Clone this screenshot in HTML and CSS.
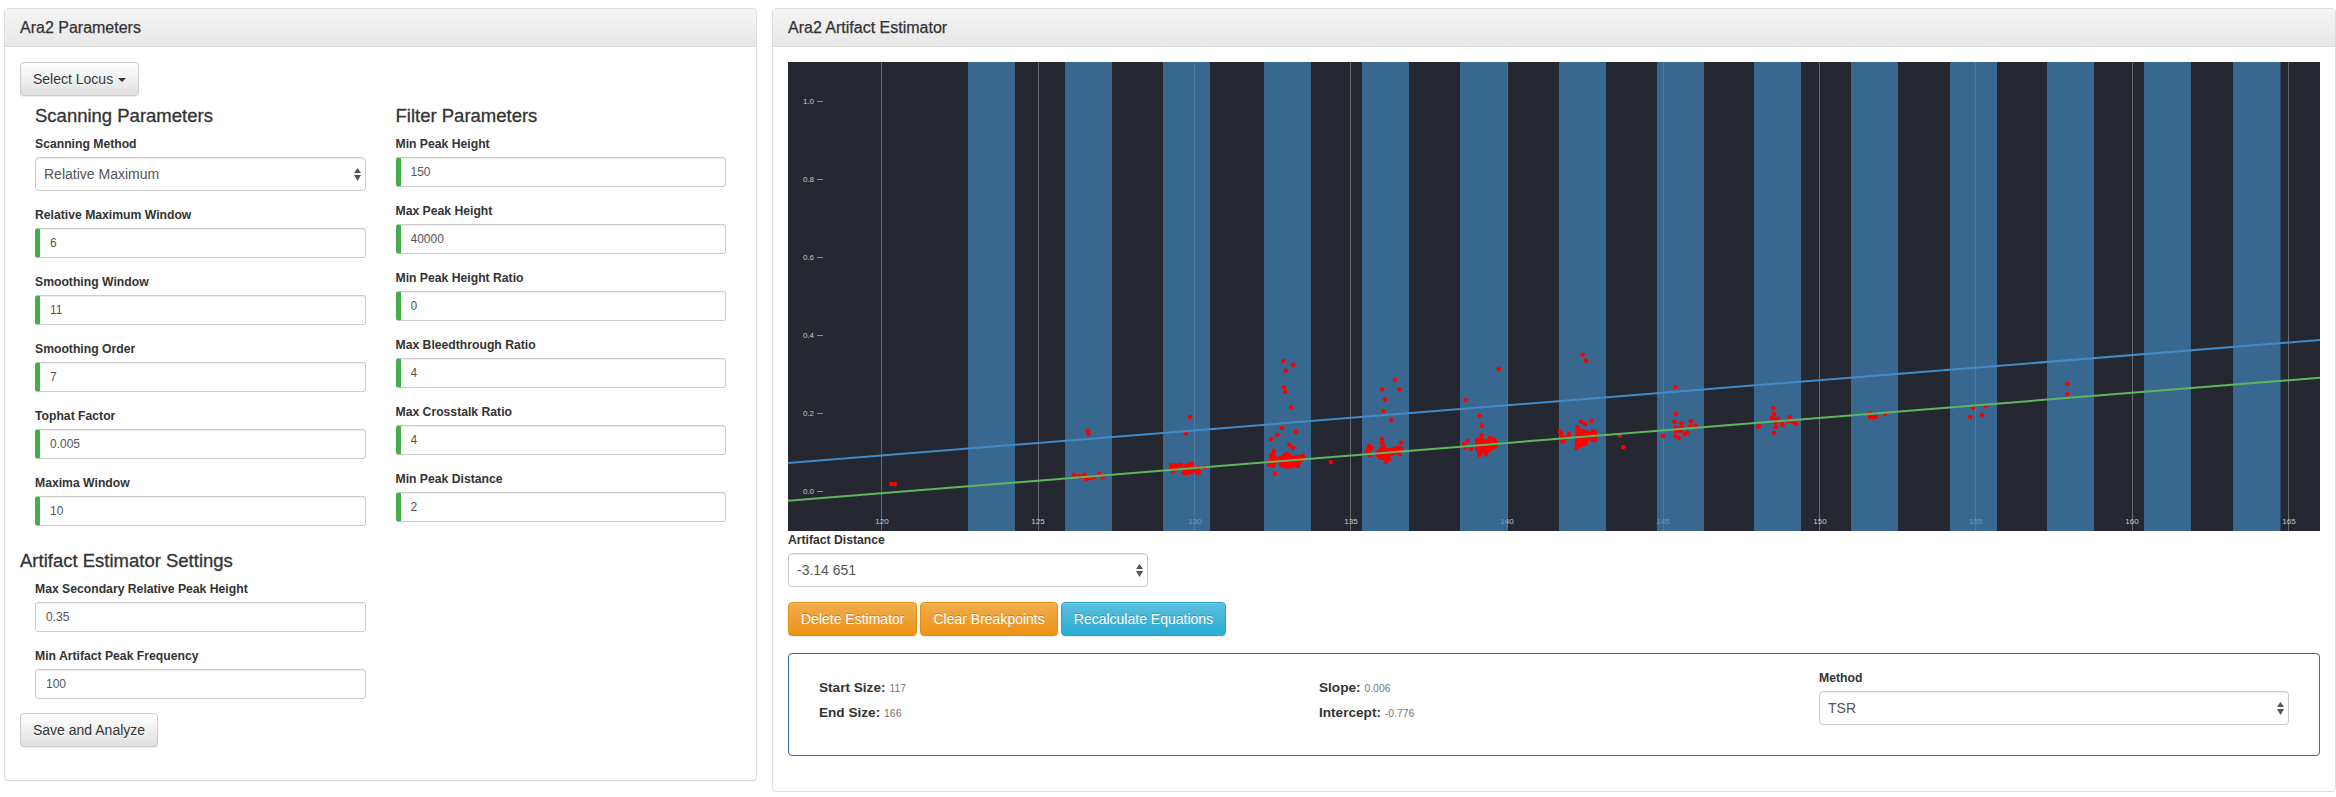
FILE: index.html
```html
<!DOCTYPE html>
<html lang="en">
<head>
<meta charset="utf-8">
<title>Ara2</title>
<link rel="stylesheet" href="styles.css">
</head>
<body>
<div class="page">
  <section class="panel panel-left">
    <div class="panel-heading">Ara2 Parameters</div>
    <div class="panel-body body-left">
      <button class="btn btn-default">Select Locus <span class="caret"></span></button>
      <div class="param-cols">
        <div class="param-col">
          <h4 class="sub-title">Scanning Parameters</h4>
          <div class="form-group">
            <label class="field-label">Scanning Method</label>
            <div class="select-wrap">
              <select class="form-select"><option>Relative Maximum</option></select>
              <svg class="select-arrows" viewBox="0 0 7 13"><path d="M3.5 0L7 5H0zM0 7h7L3.5 13z"/></svg>
            </div>
          </div>
          <div class="form-group"><label class="field-label">Relative Maximum Window</label><input class="form-input valid" value="6"></div>
          <div class="form-group"><label class="field-label">Smoothing Window</label><input class="form-input valid" value="11"></div>
          <div class="form-group"><label class="field-label">Smoothing Order</label><input class="form-input valid" value="7"></div>
          <div class="form-group"><label class="field-label">Tophat Factor</label><input class="form-input valid" value="0.005"></div>
          <div class="form-group"><label class="field-label">Maxima Window</label><input class="form-input valid" value="10"></div>
        </div>
        <div class="param-col">
          <h4 class="sub-title">Filter Parameters</h4>
          <div class="form-group"><label class="field-label">Min Peak Height</label><input class="form-input valid" value="150"></div>
          <div class="form-group"><label class="field-label">Max Peak Height</label><input class="form-input valid" value="40000"></div>
          <div class="form-group"><label class="field-label">Min Peak Height Ratio</label><input class="form-input valid" value="0"></div>
          <div class="form-group"><label class="field-label">Max Bleedthrough Ratio</label><input class="form-input valid" value="4"></div>
          <div class="form-group"><label class="field-label">Max Crosstalk Ratio</label><input class="form-input valid" value="4"></div>
          <div class="form-group"><label class="field-label">Min Peak Distance</label><input class="form-input valid" value="2"></div>
        </div>
      </div>
      <h4 class="sub-title settings-title">Artifact Estimator Settings</h4>
      <div class="settings-fields">
        <div class="form-group"><label class="field-label">Max Secondary Relative Peak Height</label><input class="form-input" value="0.35"></div>
        <div class="form-group"><label class="field-label">Min Artifact Peak Frequency</label><input class="form-input" value="100"></div>
      </div>
      <button class="btn btn-default btn-save">Save and Analyze</button>
    </div>
  </section>

  <section class="panel panel-right">
    <div class="panel-heading">Ara2 Artifact Estimator</div>
    <div class="panel-body">
      <svg class="plot" viewBox="788 62 1532 469" width="1532" height="469">
        <rect class="plot-bg" x="788" y="62" width="1532" height="469"/>
        <g class="grid">
          <path d="M881.5 62v469M1038.5 62v469M1194.5 62v469M1350.5 62v469M1507.5 62v469M1663.5 62v469M1819.5 62v469M1975.5 62v469M2132.5 62v469M2288.5 62v469"/>
        </g>
        <g class="ticks">
          <path d="M817 101.5h6M817 179.5h6M817 257.5h6M817 335.5h6M817 413.5h6M817 491.5h6"/>
        </g>
        <g class="tick-labels y-labels">
          <text x="814" y="104">1.0</text>
          <text x="814" y="182">0.8</text>
          <text x="814" y="260">0.6</text>
          <text x="814" y="338">0.4</text>
          <text x="814" y="416">0.2</text>
          <text x="814" y="494">0.0</text>
        </g>
        <g class="tick-labels x-labels">
          <text x="882" y="524">120</text>
          <text x="1038" y="524">125</text>
          <text x="1195" y="524">130</text>
          <text x="1351" y="524">135</text>
          <text x="1507" y="524">140</text>
          <text x="1663" y="524">145</text>
          <text x="1820" y="524">150</text>
          <text x="1976" y="524">155</text>
          <text x="2132" y="524">160</text>
          <text x="2289" y="524">165</text>
        </g>
        <g class="bars">
          <rect x="968" y="62" width="47" height="469"/>
          <rect x="1065" y="62" width="47" height="469"/>
          <rect x="1163" y="62" width="47" height="469"/>
          <rect x="1264" y="62" width="47" height="469"/>
          <rect x="1362" y="62" width="47" height="469"/>
          <rect x="1460" y="62" width="47" height="469"/>
          <rect x="1559" y="62" width="47" height="469"/>
          <rect x="1657" y="62" width="47" height="469"/>
          <rect x="1754" y="62" width="47" height="469"/>
          <rect x="1851" y="62" width="47" height="469"/>
          <rect x="1950" y="62" width="47" height="469"/>
          <rect x="2047" y="62" width="47" height="469"/>
          <rect x="2144" y="62" width="47" height="469"/>
          <rect x="2233" y="62" width="47.500" height="469"/>
        </g>
        <path class="points" d="M891.4 484h0M895 484.300h0M1087.900 430.700h0M1088.400 433.700h0M1074 474.700h0M1078.700 475.700h0M1084.800 474.700h0M1086.300 479h0M1090.400 478.300h0M1094.500 476.700h0M1099 474h0M1102.600 477.300h0M1081 477h0M1190 417h0M1185.800 433.300h0M1171 465h0M1171 469h0M1173 467h0M1173 471h0M1175 465h0M1175 469h0M1177 467h0M1179 465h0M1181 465h0M1184 469h0M1184 473h0M1186 466h0M1186 470h0M1186 473h0M1188 466h0M1188 470h0M1188 473h0M1190 465h0M1190 469h0M1190 472h0M1192 464h0M1192 468h0M1192 472h0M1196 470h0M1197 473h0M1199 472h0M1205 467h0M1198 468h0M1283.300 361h0M1293 364.700h0M1285.700 370.700h0M1284 387h0M1285 391.700h0M1291 407h0M1281.700 428h0M1296 431.700h0M1277.300 434.700h0M1271 439.300h0M1289.300 444.700h0M1293 448h0M1273.700 450.700h0M1273.300 454h0M1275 473.700h0M1330.700 462h0M1269 465h0M1270 462h0M1272 459h0M1271 456h0M1274 463h0M1276 461h0M1273 466h0M1275 458h0M1277 459h0M1281 458h0M1281 462h0M1281 465h0M1283 457h0M1283 461h0M1283 465h0M1285 455h0M1285 459h0M1285 463h0M1285 466h0M1287 454h0M1287 458h0M1287 462h0M1287 466h0M1289 456h0M1289 460h0M1289 464h0M1289 467h0M1291 458h0M1291 462h0M1291 466h0M1293 459h0M1293 463h0M1293 466h0M1295 458h0M1295 461h0M1295 465h0M1297 457h0M1297 461h0M1298 466h0M1299 458h0M1299 462h0M1301 457h0M1301 460h0M1303 456h0M1395 379.700h0M1382.300 389.300h0M1399.300 389.300h0M1385 399.700h0M1383.300 411h0M1391.300 420.300h0M1401 442.700h0M1401.700 448.700h0M1399.700 454.300h0M1382 439h0M1386 462h0M1367 452h0M1368 449h0M1369 446h0M1370 450h0M1370 455h0M1367 453h0M1371 448h0M1382 443h0M1383 446h0M1381 449h0M1384 448h0M1378 452h0M1378 455h0M1380 451h0M1380 455h0M1380 458h0M1382 452h0M1382 456h0M1384 451h0M1384 455h0M1384 458h0M1386 450h0M1386 454h0M1388 451h0M1388 455h0M1388 458h0M1390 450h0M1390 454h0M1392 450h0M1392 454h0M1394 449h0M1394 453h0M1396 449h0M1396 452h0M1398 448h0M1398 451h0M1389 459h0M1498.700 368.700h0M1465.700 400.300h0M1479.300 415.700h0M1481.700 425.700h0M1481.700 435h0M1467.700 440.700h0M1464 444.300h0M1465 447.700h0M1471 448.700h0M1490 437.700h0M1494 439.300h0M1479.700 455h0M1486 454.300h0M1477 440h0M1477 444h0M1477 448h0M1479 441h0M1479 445h0M1479 449h0M1479 452h0M1481 439h0M1481 443h0M1481 447h0M1481 451h0M1483 441h0M1483 445h0M1483 449h0M1483 452h0M1485 441h0M1485 445h0M1485 449h0M1487 443h0M1487 447h0M1487 451h0M1489 442h0M1489 446h0M1489 450h0M1491 444h0M1491 448h0M1493 445h0M1493 448h0M1495 446h0M1495 442h0M1582.600 354.700h0M1586.200 360.700h0M1591.300 420.700h0M1581 421.700h0M1585 424h0M1577.600 427h0M1576.500 447.700h0M1619.700 435.700h0M1623.200 447h0M1577 432h0M1577 436h0M1577 440h0M1577 444h0M1579 430h0M1579 434h0M1579 438h0M1579 442h0M1579 446h0M1581 433h0M1581 437h0M1581 441h0M1581 445h0M1583 431h0M1583 435h0M1583 439h0M1583 443h0M1585 432h0M1585 436h0M1585 440h0M1585 444h0M1587 433h0M1587 437h0M1587 441h0M1589 434h0M1589 438h0M1591 435h0M1591 438h0M1593 431h0M1593 435h0M1593 440h0M1595 433h0M1595 437h0M1595 440h0M1561 433h0M1562 436h0M1560 432h0M1562 440h0M1564 441h0M1565 438h0M1563 442h0M1569 434h0M1568 437h0M1675.500 387h0M1676 414h0M1674.500 421.700h0M1690.800 421h0M1681.600 423.300h0M1695.300 425.700h0M1690.300 426.300h0M1676 427.300h0M1681.600 426.700h0M1676 431.300h0M1681 431h0M1687 432.700h0M1685 434.300h0M1662.800 436h0M1675.500 436.300h0M1678.600 438h0M1678 430h0M1773.500 408.300h0M1774 414h0M1771.500 418h0M1778 418.700h0M1775 419h0M1789.800 417.300h0M1775.500 422.700h0M1787.700 421h0M1792.800 422.300h0M1796.400 424h0M1782.100 424h0M1782.600 425.300h0M1776 427.300h0M1758.800 425.700h0M1758.300 427h0M1774 433h0M1870 413.300h0M1870 417.300h0M1872.500 417.300h0M1876 416.700h0M1885.200 414h0M1973 407.700h0M1985.700 406.300h0M1970 417h0M1982 414.700h0M2067.400 384h0M2067.400 394.300h0"/>
        <line class="line-blue" x1="788" y1="463" x2="2320" y2="340"/>
        <line class="line-green" x1="788" y1="500.700" x2="2320" y2="377.700"/>
      </svg>

      <div class="distance-field">
        <label class="field-label">Artifact Distance</label>
        <div class="select-wrap">
          <select class="form-select"><option>-3.14 651</option></select>
          <svg class="select-arrows" viewBox="0 0 7 13"><path d="M3.500 0L7 5H0zM0 7h7L3.500 13z"/></svg>
        </div>
      </div>

      <div class="action-row">
        <button class="btn btn-warning">Delete Estimator</button>
        <button class="btn btn-warning">Clear Breakpoints</button>
        <button class="btn btn-info">Recalculate Equations</button>
      </div>

      <div class="info-box">
        <div class="info-col info-text">
          <div class="info-line"><strong>Start Size:</strong> <small>117</small></div>
          <div class="info-line"><strong>End Size:</strong> <small>166</small></div>
        </div>
        <div class="info-col info-text">
          <div class="info-line"><strong>Slope:</strong> <small>0.006</small></div>
          <div class="info-line"><strong>Intercept:</strong> <small>-0.776</small></div>
        </div>
        <div class="info-col">
          <div class="form-group">
            <label class="field-label">Method</label>
            <div class="select-wrap">
              <select class="form-select"><option>TSR</option></select>
              <svg class="select-arrows" viewBox="0 0 7 13"><path d="M3.500 0L7 5H0zM0 7h7L3.500 13z"/></svg>
            </div>
          </div>
        </div>
      </div>
    </div>
  </section>
</div>
</body>
</html>
```
FILE: styles.css
```css
* { box-sizing: border-box; }
html, body { margin: 0; padding: 0; background: #fff; }
body {
  font-family: "Liberation Sans", Arial, sans-serif;
  font-size: 14px;
  line-height: 20px;
  color: #333;
}
.page {
  display: flex;
  align-items: flex-start;
  gap: 15px;
  padding: 8px 0 0 4px;
}
.panel {
  background: #fff;
  border: 1px solid #ddd;
  border-radius: 4px;
  box-shadow: 0 1px 1px rgba(0, 0, 0, .05);
}
.panel-left { width: 753px; flex: none; }
.panel-right { width: 1564px; flex: none; }
.panel-heading {
  height: 38px;
  padding: 9px 15px;
  font-size: 16px;
  color: #333;
  -webkit-text-stroke: .25px #333;
  background: linear-gradient(to bottom, #f5f5f5, #e8e8e8);
  border-bottom: 1px solid #ddd;
  border-radius: 3px 3px 0 0;
}
.panel-body { padding: 15px; }
.body-left { padding-bottom: 33px; }

.btn {
  display: block;
  height: 34px;
  padding: 6px 12px;
  font: 14px/20px "Liberation Sans", Arial, sans-serif;
  border: 1px solid #ccc;
  border-radius: 4px;
  white-space: nowrap;
  box-shadow: inset 0 1px 0 rgba(255, 255, 255, .15), 0 1px 1px rgba(0, 0, 0, .075);
}
.btn-default {
  color: #333;
  background: linear-gradient(to bottom, #fff, #e0e0e0);
  border-color: #ccc;
  text-shadow: 0 1px 0 #fff;
}
.btn-warning {
  color: #fff;
  background: linear-gradient(to bottom, #f0ad4e, #eb9316);
  border-color: #e38d13;
  text-shadow: 0 -1px 0 rgba(0, 0, 0, .2);
}
.btn-info {
  color: #fff;
  background: linear-gradient(to bottom, #5bc0de, #2aabd2);
  border-color: #28a4c9;
  text-shadow: 0 -1px 0 rgba(0, 0, 0, .2);
}
.btn-save { margin-top: 1px; }
.caret {
  display: inline-block;
  width: 0;
  height: 0;
  margin-left: 1px;
  vertical-align: middle;
  border-top: 4px solid #333;
  border-left: 4px solid transparent;
  border-right: 4px solid transparent;
}

.param-cols {
  display: flex;
  gap: 30px;
  padding-left: 15px;
}
.param-col { width: 330.500px; flex: none; }
.sub-title {
  margin: 10px 0 8px;
  font-size: 18.500px;
  line-height: 20px;
  font-weight: 400;
  color: #333;
  -webkit-text-stroke: .3px #333;
}
.settings-title { margin-top: 11px; }
.settings-fields { width: 345.500px; padding-left: 15px; }
.form-group { margin-bottom: 14px; }
.field-label {
  display: block;
  margin-bottom: 3px;
  font-size: 12.200px;
  line-height: 20px;
  font-weight: 700;
  color: #333;
}
.form-input {
  display: block;
  width: 100%;
  height: 30px;
  padding: 5px 10px;
  font: 12px/18px "Liberation Sans", Arial, sans-serif;
  color: #555;
  background: #fff;
  border: 1px solid #ccc;
  border-radius: 3px;
  box-shadow: inset 0 1px 1px rgba(0, 0, 0, .075);
}
.form-input.valid { border-left: 5px solid #45ae4c; }
.select-wrap { position: relative; }
.form-select {
  display: block;
  width: 100%;
  height: 34px;
  padding: 6px 20px 6px 8px;
  font: 14px/20px "Liberation Sans", Arial, sans-serif;
  color: #555;
  background: #fff;
  border: 1px solid #ccc;
  border-radius: 4px;
  box-shadow: inset 0 1px 1px rgba(0, 0, 0, .075);
  appearance: none;
  -webkit-appearance: none;
}
.select-arrows {
  position: absolute;
  top: 11px;
  right: 5px;
  width: 7px;
  height: 13px;
  fill: #555;
}

.plot { display: block; }
.plot-bg { fill: #252830; }
.grid path { stroke: #66696e; stroke-width: 1; fill: none; }
.ticks path { stroke: #8a8c90; stroke-width: 1; fill: none; }
.tick-labels text {
  font-family: "Liberation Sans", Arial, sans-serif;
  font-size: 8px;
  fill: #c8c8c8;
}
.y-labels text { text-anchor: end; }
.x-labels text { text-anchor: middle; }
.bars rect { fill: #4083b9; opacity: .7; }
.points {
  fill: none;
  stroke: #ff0000;
  stroke-width: 4.600;
  stroke-linecap: round;
}
.line-blue { stroke: #428bca; stroke-width: 2; }
.line-green { stroke: #5cb85c; stroke-width: 2; }

.distance-field { width: 360px; margin-top: -1px; }
.distance-field .field-label { margin-bottom: 3px; }
.action-row {
  display: flex;
  gap: 3px;
  margin-top: 15px;
}
.info-box {
  display: flex;
  margin: 17px 0 20px;
  padding: 14px 15px 16px;
  border: 1px solid #2e6da4;
  border-radius: 4px;
}
.info-col { width: 500px; flex: none; padding: 0 15px; }
.info-text { padding-top: 9px; }
.info-line { height: 20px; margin-bottom: 5px; }
.info-line strong { font-weight: 700; font-size: 13.600px; }
.info-line small { font-size: 10.400px; color: #777; }
```
